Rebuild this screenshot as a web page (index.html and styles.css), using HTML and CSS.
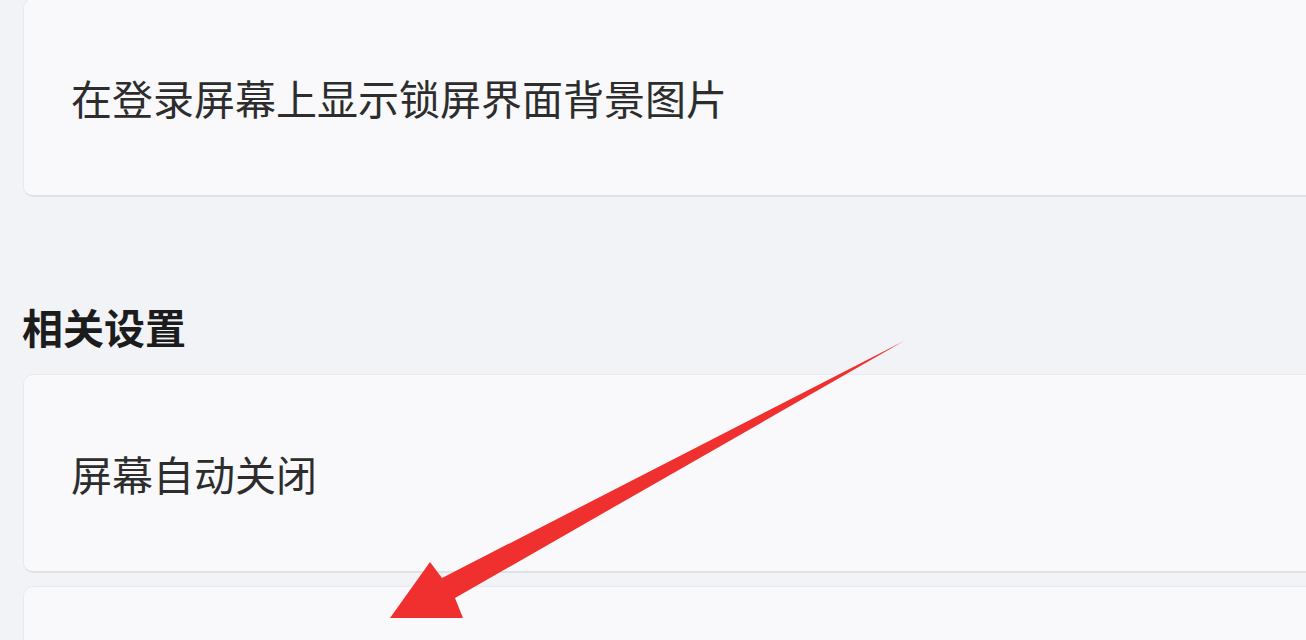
FILE: index.html
```html
<!DOCTYPE html>
<html lang="zh-CN">
<head>
    <meta charset="UTF-8">
    <meta name="viewport" content="width=device-width, initial-scale=1.0">
    <title>锁屏界面</title>
    <link rel="stylesheet" href="styles.css">
</head>
<body>
    <div class="page">
        <!-- 锁屏选项 -->
        <div class="card first">
            <span class="cardLabel">在登录屏幕上显示锁屏界面背景图片</span>
        </div>

        <!-- 相关设置 -->
        <h2 class="sectionTitle">相关设置</h2>
        <div class="card">
            <span class="cardLabel">屏幕自动关闭</span>
        </div>
        <div class="card last"></div>
    </div>

    <!-- 标注箭头 -->
    <svg class="arrow" width="1306" height="640" viewBox="0 0 1306 640">
        <polygon points="904,341 442,578 430,562 390,618 463,618 455,598" fill="#f0302e"/>
    </svg>
</body>
</html>
```

FILE: styles.css
```css
body {
    margin: 0;
    padding: 0;
    background-color: #f2f3f7;
    font-family: "Noto Sans CJK SC", "Microsoft YaHei", sans-serif;
    color: #262626;
    overflow: hidden;
    height: 640px;
}

.page {
    padding-left: 23px;
    margin-right: -30px;
    margin-top: -2px;
}

/* 设置卡片 */
.card {
    height: 196px;
    display: flex;
    align-items: center;
    padding-left: 47px;
    background-color: #f9f9fb;
    border: 1px solid #e9eaee;
    border-bottom: 2px solid #e1e2e6;
    border-radius: 10px;
}

.card + .card {
    margin-top: 13px;
}

.cardLabel {
    font-size: 41px;
    line-height: 1;
    color: #2d2d2d;
}

.sectionTitle {
    margin: 101px 0 20px -1px;
    font-size: 41px;
    font-weight: bold;
    line-height: 56px;
    color: #1c1c1c;
}

/* 箭头 */
.arrow {
    position: absolute;
    top: 0;
    left: 0;
    pointer-events: none;
}
```
